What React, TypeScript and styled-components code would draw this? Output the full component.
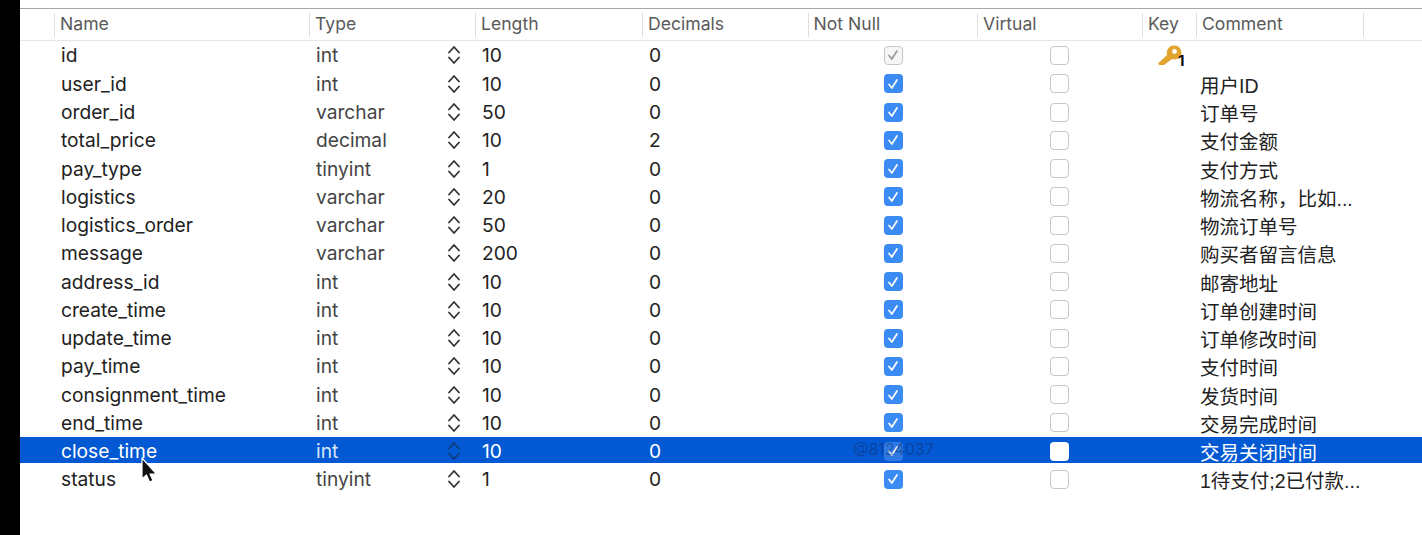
import styled, { createGlobalStyle } from "styled-components";

const GlobalStyle = createGlobalStyle`
  html, body {
    margin: 0;
    padding: 0;
    background: #fff;
  }
  #root {
    width: 1422px;
    height: 535px;
    overflow: hidden;
  }
`;

const COLUMNS = "35px 255px 166px 167px 165.5px 169.5px 165px 54px 167px 1fr";

type Field = {
  name: string;
  type: string;
  length: string;
  decimals: string;
  comment?: string;
  primary?: boolean;
  selected?: boolean;
};

const fields: Field[] = [
  { name: "id", type: "int", length: "10", decimals: "0", primary: true },
  { name: "user_id", type: "int", length: "10", decimals: "0", comment: "用户ID" },
  { name: "order_id", type: "varchar", length: "50", decimals: "0", comment: "订单号" },
  { name: "total_price", type: "decimal", length: "10", decimals: "2", comment: "支付金额" },
  { name: "pay_type", type: "tinyint", length: "1", decimals: "0", comment: "支付方式" },
  { name: "logistics", type: "varchar", length: "20", decimals: "0", comment: "物流名称，比如..." },
  { name: "logistics_order", type: "varchar", length: "50", decimals: "0", comment: "物流订单号" },
  { name: "message", type: "varchar", length: "200", decimals: "0", comment: "购买者留言信息" },
  { name: "address_id", type: "int", length: "10", decimals: "0", comment: "邮寄地址" },
  { name: "create_time", type: "int", length: "10", decimals: "0", comment: "订单创建时间" },
  { name: "update_time", type: "int", length: "10", decimals: "0", comment: "订单修改时间" },
  { name: "pay_time", type: "int", length: "10", decimals: "0", comment: "支付时间" },
  { name: "consignment_time", type: "int", length: "10", decimals: "0", comment: "发货时间" },
  { name: "end_time", type: "int", length: "10", decimals: "0", comment: "交易完成时间" },
  { name: "close_time", type: "int", length: "10", decimals: "0", comment: "交易关闭时间", selected: true },
  { name: "status", type: "tinyint", length: "1", decimals: "0", comment: "1待支付;2已付款..." },
];

const Page = styled.div`
  display: flex;
  width: 1422px;
  height: 535px;
  font-family: "Inter", "Noto Sans CJK SC", sans-serif;
`;

const BlackEdge = styled.div`
  width: 20px;
  flex: none;
  background: #000;
`;

const Table = styled.div`
  flex: 1;
  padding-top: 8px;
  background: #fff;
`;

const HeaderRow = styled.div`
  display: grid;
  grid-template-columns: ${COLUMNS};
  height: 33px;
  align-items: center;
  border-top: 1px solid #a5a5a5;
  border-bottom: 1px solid #e6e6e6;
  box-sizing: border-box;
`;

const HeaderCell = styled.div`
  height: 24px;
  line-height: 22px;
  padding-left: 5px;
  font-size: 17.6px;
  color: #5a5a5a;
  border-right: 1px solid #dedede;
  box-sizing: border-box;
  white-space: nowrap;
`;

const Rows = styled.div`
  display: flex;
  flex-direction: column;
`;

const Row = styled.div<{ $selected?: boolean }>`
  display: grid;
  grid-template-columns: ${COLUMNS};
  height: 28.27px;
  align-items: center;
  color: ${(p) => (p.$selected ? "#fff" : "#222")};
  background: ${(p) => (p.$selected ? "linear-gradient(#0259d3, #0259d3) no-repeat 0 0 / 100% 26px" : "transparent")};
  position: relative;
`;

const TextCell = styled.div`
  padding-left: 6px;
  font-size: 19.2px;
  white-space: nowrap;
  display: flex;
  align-items: center;
`;

const TypeCell = styled(TextCell)`
  justify-content: space-between;
  padding-right: 15px;
`;

const TypeName = styled.span<{ $selected?: boolean }>`
  color: ${(p) => (p.$selected ? "#dce8fa" : "#444")};
`;

const CheckCell = styled.div<{ $shift?: number }>`
  display: flex;
  justify-content: center;
  padding-right: ${(p) => p.$shift ?? 0}px;
`;

const CheckBox = styled.div<{ $kind: "on" | "off" | "locked" | "white" }>`
  width: 19px;
  height: 19px;
  border-radius: 4px;
  box-sizing: border-box;
  display: flex;
  align-items: center;
  justify-content: center;
  background: ${(p) =>
    p.$kind === "on" ? "#3a8bf3" : p.$kind === "locked" ? "#f6f6f6" : "#fff"};
  border: ${(p) =>
    p.$kind === "on" || p.$kind === "white" ? "none" : "1.5px solid #c6c6c6"};
`;

const FadedCheckBox = styled(CheckBox)`
  background: #2f79e4;
`;

const KeyCell = styled.div`
  padding-left: 14px;
  display: flex;
  align-items: center;
  position: relative;
`;

const KeyNumber = styled.span`
  font-size: 15px;
  font-weight: 700;
  color: #111;
  position: absolute;
  left: 35px;
  top: 7px;
`;

const CommentCell = styled(TextCell)`
  padding-left: 3px;
  font-size: 19.5px;
  font-family: "Liberation Sans", "Noto Sans CJK SC", sans-serif;
  position: relative;
  top: 0.5px;
`;

const Watermark = styled.span`
  position: absolute;
  left: 833px;
  top: 2px;
  font-size: 16px;
  color: rgba(20, 40, 90, 0.45);
`;

const Cursor = styled.svg`
  position: absolute;
  left: 140px;
  top: 456px;
  pointer-events: none;
`;

const Check = ({ color }: { color: string }) => (
  <svg width="12" height="12" viewBox="0 0 12 12" fill="none">
    <path d="M2 6.5 L4.8 10 L10 2" stroke={color} strokeWidth="1.7" strokeLinecap="round" strokeLinejoin="round" />
  </svg>
);

const Stepper = ({ color }: { color: string }) => (
  <svg width="14" height="20" viewBox="0 0 14 20" fill="none">
    <path d="M2 7.5 L7 2 L12 7.5 M2 12.5 L7 18 L12 12.5" stroke={color} strokeWidth="1.8" strokeLinecap="round" strokeLinejoin="round" />
  </svg>
);

const KeyIcon = () => (
  <svg width="26" height="22" viewBox="0 0 26 22">
    <path
      d="M1 19.5 L10 11 C9 6 12 1.5 17 1.5 C21.5 1.5 24.5 4.5 24.5 9 C24.5 13.5 20 16.5 15 15 L7 21 L2 21 Z"
      fill="#e3a32f"
    />
    <circle cx="17.5" cy="7.5" r="2.4" fill="#fff" />
  </svg>
);

const headers = ["", "Name", "Type", "Length", "Decimals", "Not Null", "Virtual", "Key", "Comment"];

const App = () => {
  return (
    <Page>
      <GlobalStyle />
      <BlackEdge />
      <Table>
        <HeaderRow>
          {headers.map((h) => (
            <HeaderCell key={h}>{h}</HeaderCell>
          ))}
        </HeaderRow>
        <Rows>
          {fields.map((f) => (
            <Row key={f.name} $selected={f.selected}>
              <div />
              <TextCell>{f.name}</TextCell>
              <TypeCell>
                <TypeName $selected={f.selected}>{f.type}</TypeName>
                <Stepper color={f.selected ? "#123a78" : "#333"} />
              </TypeCell>
              <TextCell>{f.length}</TextCell>
              <TextCell>{f.decimals}</TextCell>
              <CheckCell>
                {f.primary ? (
                  <CheckBox $kind="locked">
                    <Check color="#9a9a9a" />
                  </CheckBox>
                ) : f.selected ? (
                  <FadedCheckBox $kind="on">
                    <Check color="#e8eefa" />
                  </FadedCheckBox>
                ) : (
                  <CheckBox $kind="on">
                    <Check color="#fff" />
                  </CheckBox>
                )}
              </CheckCell>
              <CheckCell $shift={3}>
                <CheckBox $kind={f.selected ? "white" : "off"} />
              </CheckCell>
              <KeyCell>
                {f.primary && (
                  <>
                    <KeyIcon />
                    <KeyNumber>1</KeyNumber>
                  </>
                )}
              </KeyCell>
              <CommentCell>{f.comment}</CommentCell>
              {f.selected && <Watermark>@8124037</Watermark>}
            </Row>
          ))}
        </Rows>
      </Table>
      <Cursor width="20" height="28" viewBox="0 0 20 28">
        <path d="M2 2 L2 23 L6.5 19 L9.5 26 L13 24.5 L10 18 L16.5 18 Z" fill="#111" stroke="#fff" strokeWidth="1.2" strokeLinejoin="round" />
      </Cursor>
    </Page>
  );
};

export default App;
